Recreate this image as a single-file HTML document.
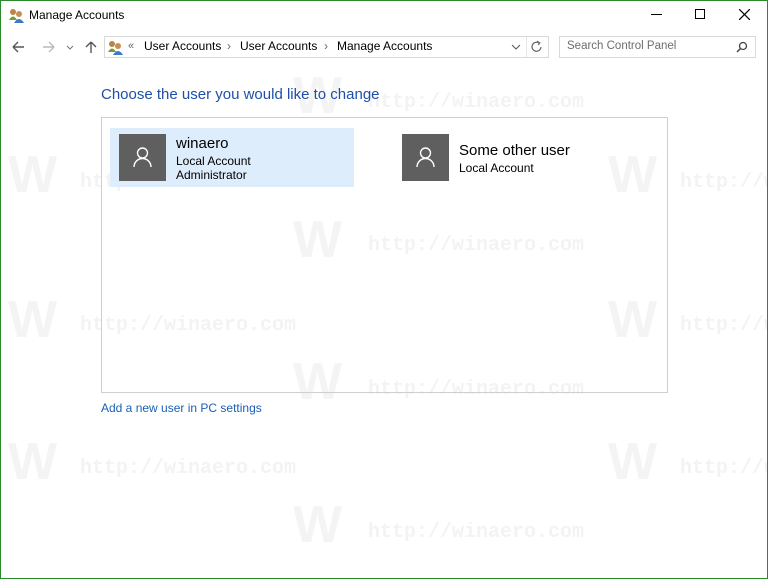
<!DOCTYPE html>
<html><head><meta charset="utf-8"><style>
*{margin:0;padding:0;box-sizing:border-box}
html,body{width:768px;height:579px;overflow:hidden}
body{background:#fff;font-family:"Liberation Sans",sans-serif;position:relative}
.clip{position:absolute;left:0;top:0;width:768px;height:579px;overflow:hidden}
.frame{position:absolute;inset:0;border:1px solid #2b8a2b}
.a{position:absolute;white-space:nowrap}
.wm{position:absolute;font:bold 20px "Liberation Mono",monospace;color:#f3f3f3;white-space:nowrap}
.wmW{position:absolute;font:bold 52px "Liberation Sans",sans-serif;color:#f4f4f4}
.t{font-size:12px;color:#000}
</style></head><body>
<div class="clip">
<div class="wmW" style="left:8px;top:145px">W</div><div class="wm" style="left:80px;top:171px">http://winaero.com</div>
<div class="wmW" style="left:293px;top:210px">W</div><div class="wm" style="left:368px;top:234px">http://winaero.com</div>
<div class="wmW" style="left:293px;top:66px">W</div><div class="wm" style="left:368px;top:91px">http://winaero.com</div>
<div class="wmW" style="left:8px;top:290px">W</div><div class="wm" style="left:80px;top:314px">http://winaero.com</div>
<div class="wmW" style="left:293px;top:352px">W</div><div class="wm" style="left:368px;top:378px">http://winaero.com</div>
<div class="wmW" style="left:8px;top:432px">W</div><div class="wm" style="left:80px;top:457px">http://winaero.com</div>
<div class="wmW" style="left:293px;top:495px">W</div><div class="wm" style="left:368px;top:521px">http://winaero.com</div>
<div class="wmW" style="left:608px;top:145px">W</div><div class="wm" style="left:680px;top:171px">http://w</div>
<div class="wmW" style="left:608px;top:290px">W</div><div class="wm" style="left:680px;top:314px">http://w</div>
<div class="wmW" style="left:608px;top:432px">W</div><div class="wm" style="left:680px;top:457px">http://w</div>

<svg class="a" style="left:8px;top:7px" width="16" height="16"><circle cx="5" cy="5" r="3" fill="#b8864a"/><path d="M1 13 q4-7 8 0z" fill="#7a9a3a"/><circle cx="11" cy="7" r="3" fill="#c89050"/><path d="M6 16 q5-8 10 0z" fill="#3a7ac8"/></svg>
<div class="a t" style="left:29px;top:8px">Manage Accounts</div>
<div class="a" style="left:651px;top:14px;width:11px;height:1px;background:#000"></div>
<div class="a" style="left:695px;top:9px;width:10px;height:10px;border:1px solid #000"></div>
<svg class="a" style="left:739px;top:9px" width="11" height="11"><path d="M0 0L11 11M11 0L0 11" stroke="#000" stroke-width="1.2"/></svg>

<svg class="a" style="left:11px;top:40px" width="90" height="14"><path d="M2 7h11M2 7l5-5M2 7l5 5" stroke="#555" stroke-width="1.4" fill="none"/><path d="M32 7h11M43 7l-5-5M43 7l-5 5" stroke="#bbb" stroke-width="1.4" fill="none"/><path d="M56 6l3 3 3-3" stroke="#777" fill="none"/><path d="M80 2v11M80 2l-5 5M80 2l5 5" stroke="#555" stroke-width="1.4" fill="none"/></svg>
<div class="a" style="left:104px;top:36px;width:445px;height:22px;border:1px solid #d9d9d9"></div>
<div class="a" style="left:526px;top:37px;width:1px;height:20px;background:#e5e5e5"></div>
<svg class="a" style="left:107px;top:39px" width="16" height="16"><circle cx="5" cy="5" r="3" fill="#b8864a"/><path d="M1 13 q4-7 8 0z" fill="#7a9a3a"/><circle cx="11" cy="7" r="3" fill="#c89050"/><path d="M6 16 q5-8 10 0z" fill="#3a7ac8"/></svg>
<div class="a t" style="left:128px;top:40px;color:#666;font-size:11px">«</div>
<div class="a t" style="left:144px;top:39px">User Accounts</div>
<div class="a t" style="left:227px;top:39px;color:#666">›</div>
<div class="a t" style="left:240px;top:39px">User Accounts</div>
<div class="a t" style="left:324px;top:39px;color:#666">›</div>
<div class="a t" style="left:337px;top:39px">Manage Accounts</div>
<svg class="a" style="left:511px;top:43px" width="10" height="8"><path d="M1 2l4 4 4-4" stroke="#555" fill="none"/></svg>
<svg class="a" style="left:530px;top:40px" width="13" height="13"><path d="M9 3a4.5 4.5 0 1 0 2 4" stroke="#666" fill="none" stroke-width="1.2"/><path d="M7 1l3 2-2 2" stroke="#666" fill="none"/></svg>
<div class="a" style="left:559px;top:36px;width:197px;height:22px;border:1px solid #d9d9d9"></div>
<div class="a t" style="left:567px;top:40px;color:#6d6d6d;font-size:11.5px">Search Control Panel</div>
<svg class="a" style="left:736px;top:41px" width="12" height="12"><circle cx="7" cy="5" r="3.5" stroke="#444" fill="none" stroke-width="1.3"/><path d="M4.5 7.5L1 11" stroke="#444" stroke-width="1.5"/></svg>

<div class="a" style="left:101px;top:86px;font-size:15px;color:#1e4fa8">Choose the user you would like to change</div>
<div class="a" style="left:101px;top:117px;width:567px;height:276px;border:1px solid #cfcfcf"></div>
<div class="a" style="left:110px;top:128px;width:244px;height:59px;background:#deedfb"></div>
<div class="a" style="left:119px;top:134px;width:47px;height:47px;background:#5f5f5f"></div>
<svg class="a" style="left:130px;top:145px" width="25" height="25"><circle cx="12.5" cy="8" r="5" stroke="#fff" fill="none" stroke-width="1.4"/><path d="M4 22a8.5 8.5 0 0 1 17 0" stroke="#fff" fill="none" stroke-width="1.4"/></svg>
<div class="a" style="left:176px;top:135px;font-size:15px">winaero</div>
<div class="a t" style="left:176px;top:154px">Local Account</div>
<div class="a t" style="left:176px;top:168px">Administrator</div>
<div class="a" style="left:402px;top:134px;width:47px;height:47px;background:#5f5f5f"></div>
<svg class="a" style="left:413px;top:145px" width="25" height="25"><circle cx="12.5" cy="8" r="5" stroke="#fff" fill="none" stroke-width="1.4"/><path d="M4 22a8.5 8.5 0 0 1 17 0" stroke="#fff" fill="none" stroke-width="1.4"/></svg>
<div class="a" style="left:459px;top:142px;font-size:15px">Some other user</div>
<div class="a t" style="left:459px;top:161px">Local Account</div>
<div class="a" style="left:101px;top:401px;font-size:12px;color:#1a5fb4">Add a new user in PC settings</div>
<div class="frame"></div>
</div>
</body></html>
